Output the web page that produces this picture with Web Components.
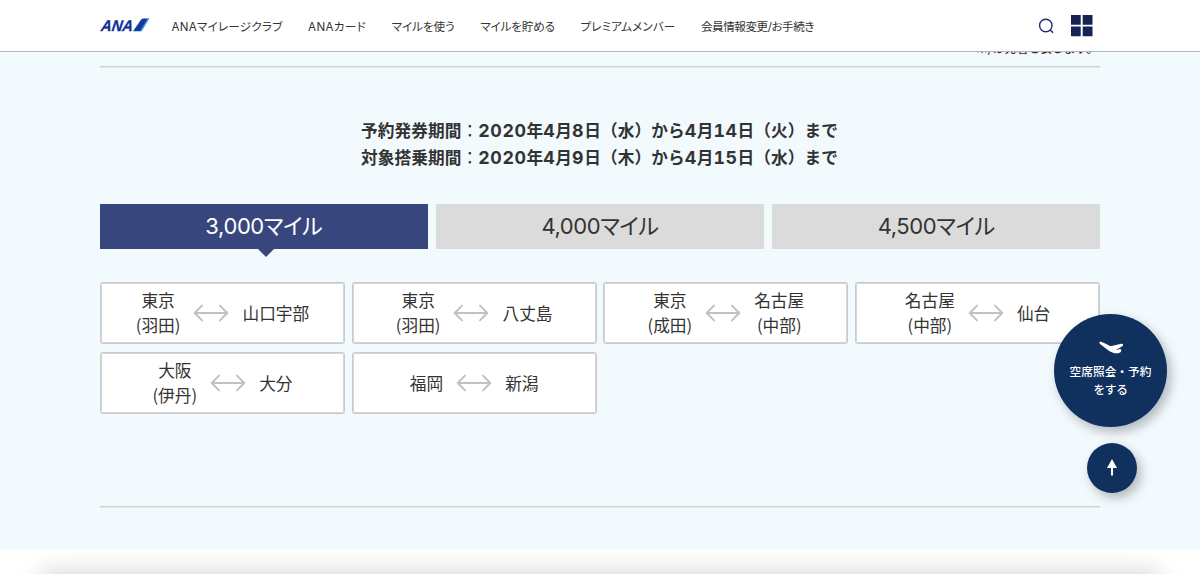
<!DOCTYPE html>
<html lang="ja">
<head>
<meta charset="utf-8">
<title>ANA トクたびマイル</title>
<style>
html,body{margin:0;height:574px;overflow:hidden}
body{font-family:"Liberation Sans","Noto Sans CJK JP",sans-serif;color:#333;background:#fff}
</style>
</head>
<body>
<miles-page></miles-page>
<script>
const define=(name,html,init)=>customElements.define(name,class extends HTMLElement{
  constructor(){super();this.attachShadow({mode:'open'}).innerHTML=html;}
  connectedCallback(){if(init)init(this,this.shadowRoot);}
});

/* Text set to a given measure by even tracking. */
define('fit-text','<style>:host{display:block;white-space:nowrap;flex:none}span{display:inline-block}</style><span><slot></slot></span>',(el,root)=>{
  const w=+el.getAttribute('w'),s=root.querySelector('span');
  el.style.width=w+'px';
  const n=[...el.textContent].length;
  if(n)s.style.letterSpacing=((w-s.getBoundingClientRect().width)/n)+'px';
});

define('ana-logo',`<style>:host{display:block;width:50px;height:15px}svg{display:block}text{font:italic bold 15.6px "Liberation Sans",sans-serif}</style>
<svg width="50" height="15" viewBox="0 0 50 15"><text x="0" y="13.3" transform="translate(2.4 0) skewX(-8)" fill="#12309b" stroke="#12309b" stroke-width=".3" textLength="32" lengthAdjust="spacingAndGlyphs">ANA</text>
<path d="M41 1.8Q42 .5 43.5 .5H49L41.3 13.3H33Z" fill="#123a9c"/><path d="M47.8 .5h1.6L41.7 13.3h-1.7Z" fill="#43a5e2"/></svg>`);

define('site-header',`<style>
:host{display:flex;align-items:center;box-sizing:border-box;height:52px;background:#fff;border-bottom:1px solid #b4b7ba;padding:0 107.5px 0 100px}
nav{display:flex;gap:25.6px;margin-left:21.5px;font-size:11.6px;line-height:18px;flex:1;font-family:Inter,"Noto Sans CJK JP",sans-serif;font-feature-settings:"palt";padding-top:2px}
.tools{display:flex;align-items:center;gap:16px;padding-top:1px}svg{display:block}
</style>
<ana-logo></ana-logo>
<nav><fit-text w="111">ANAマイレージクラブ</fit-text><fit-text w="58">ANAカード</fit-text><fit-text w="63">マイルを使う</fit-text><fit-text w="74.5">マイルを貯める</fit-text><fit-text w="95">プレミアムメンバー</fit-text><fit-text w="113">会員情報変更/お手続き</fit-text></nav>
<div class="tools"><svg width="17" height="17" viewBox="0 0 17 17" fill="none" stroke="#1b2d72" stroke-width="1.4"><circle cx="7.8" cy="7.5" r="6.2"/><path d="M12 11.8l3 3"/></svg>
<svg width="22" height="22" viewBox="0 0 22 22" fill="#152453"><path d="M0 0h9.7v9.7H0zM11.7 0h9.8v9.7h-9.8zM0 11.6h9.7v9.7H0zM11.7 11.6h9.8v9.7h-9.8z"/></svg></div>`);

define('mile-tab',`<style>
:host{display:flex;justify-content:center;align-items:center;box-sizing:border-box;height:45px;padding-bottom:2px;background:#dbdbdb;color:#333;position:relative;font:22px/32px Inter,"Noto Sans CJK JP",sans-serif;font-feature-settings:"palt"}
:host([selected]){background:#37477e;color:#fff}
:host([selected])::after{content:"";position:absolute;top:44.5px;left:158px;border:8.5px solid transparent;border-top-color:#37477e;border-bottom:0}
</style><fit-text w="117"><slot></slot></fit-text>`,(el,root)=>{
  const s=root.querySelector('fit-text').shadowRoot.querySelector('span');
  s.style.letterSpacing='0';
  s.style.letterSpacing=((117-s.getBoundingClientRect().width)/el.textContent.length)+'px';
});

define('route-arrow',`<style>:host{display:block;width:36px;height:18px}svg{display:block}</style>
<svg width="36" height="18" viewBox="0 0 36 18" fill="none" stroke="#c1c1c1" stroke-width="2" stroke-linecap="round" stroke-linejoin="round"><path d="M2 9H34M9 1.6L1.7 9L9 16.4M27 1.6L34.3 9L27 16.4"/></svg>`);

define('route-card',`<style>
:host{display:flex;align-items:center;justify-content:center;box-sizing:border-box;height:62px;border:1px solid #c9cacc;box-shadow:inset 0 0 0 1px #d5d6d8;border-radius:2.5px;background:#fff;font:16.7px/25px "Noto Sans CJK JP",sans-serif;text-align:center;white-space:nowrap}
route-arrow{margin:0 13px}
</style><slot name="from"></slot><route-arrow></route-arrow><slot name="to"></slot>`);

define('booking-button',`<style>
:host{display:flex;flex-direction:column;align-items:center;box-sizing:border-box;width:113px;height:113px;padding-top:27px;border-radius:50%;background:#10305e;box-shadow:4px 5px 11px #0004;color:#fff;text-align:center;font:500 11.7px/18px "Noto Sans CJK JP",sans-serif}
svg{display:block;margin-bottom:7.5px}
</style><svg width="24" height="13" viewBox="0 0 24 13" fill="#fff"><path d="M1.2.6C.2 1 .2 2 1 2.9L9.5 9.5C13 12 17 12.9 20 12c2.8-.7 2.7-3.7 1.3-4-1.2-.3-2.5 1-4.3.8 2.8-1.4 6.1-3 7-4.3.7-1.4-.6-2.2-1.8-1.7L11.6 5.3C8.5 4 5 1.5 1.2.6Z"/></svg><fit-text w="82">空席照会・予約</fit-text><fit-text w="34">をする</fit-text>`);

define('top-button',`<style>:host{display:flex;align-items:center;justify-content:center;box-sizing:border-box;width:50px;height:50px;padding-bottom:1px;border-radius:50%;background:#10305e;box-shadow:4px 5px 11px #0004}svg{display:block}</style>
<svg width="10" height="17" viewBox="0 0 10 17"><path d="M5 0L10 9H6V16.5H4V9H0Z" fill="#fff"/></svg>`);

define('miles-page',`<style>
:host{display:block;position:relative;width:1200px;height:574px;overflow:hidden}
site-header{position:absolute;inset:0 0 auto;z-index:2}
main{box-sizing:border-box;height:549px;background:#f2fafe;padding:34px 100px 0}
.note{display:flex;justify-content:flex-end;height:32px;font:500 12px/28px "Noto Sans CJK JP",sans-serif;padding-right:2px;box-sizing:border-box}
section{box-sizing:border-box;height:441px;border:solid #cdd1d3;border-width:1px 0;box-shadow:0 1px #e3e9ec,inset 0 1px #e3e9ec;padding-top:50px}
.period{display:flex;flex-direction:column;align-items:center;font:bold 16.67px/27px "Noto Sans CJK JP",sans-serif}
.period i{font:normal bold 17.8px/20px Inter,sans-serif;font-feature-settings:"tnum";letter-spacing:.55px}
.period u{font-weight:400;text-decoration:none}
.tabs{display:grid;grid-template-columns:repeat(3,1fr);gap:8.5px;margin-top:33px}
.routes{display:grid;grid-template-columns:repeat(4,245px);gap:8px 6.7px;margin-top:33px}
.float{position:absolute;z-index:1;left:1054px;top:314px;display:flex;flex-direction:column;align-items:center;gap:16px}
top-button{margin-left:2px}
footer{height:25px;position:relative;overflow:hidden}
footer::before{content:"";position:absolute;left:44px;right:44px;top:27px;height:40px;box-shadow:0 0 27px 3px #0000002e}
</style>
<site-header></site-header>
<main><div class="note"><fit-text w="122">※/は発着を表します。</fit-text></div>
<section>
<div class="period"><fit-text w="478">予約発券期間<u>：</u><i>2020</i>年<i>4</i>月<i>8</i>日（水）から<i>4</i>月<i>14</i>日（火）まで</fit-text><fit-text w="478">対象搭乗期間<u>：</u><i>2020</i>年<i>4</i>月<i>9</i>日（木）から<i>4</i>月<i>15</i>日（水）まで</fit-text></div>
<div class="tabs"><mile-tab selected>3,000マイル</mile-tab><mile-tab>4,000マイル</mile-tab><mile-tab>4,500マイル</mile-tab></div>
<div class="routes">
<route-card><span slot="from">東京<br>(羽田)</span><span slot="to">山口宇部</span></route-card>
<route-card><span slot="from">東京<br>(羽田)</span><span slot="to">八丈島</span></route-card>
<route-card><span slot="from">東京<br>(成田)</span><span slot="to">名古屋<br>(中部)</span></route-card>
<route-card><span slot="from">名古屋<br>(中部)</span><span slot="to">仙台</span></route-card>
<route-card><span slot="from">大阪<br>(伊丹)</span><span slot="to">大分</span></route-card>
<route-card><span slot="from">福岡</span><span slot="to">新潟</span></route-card>
</div></section></main>
<footer></footer>
<div class="float"><booking-button></booking-button><top-button></top-button></div>`);
</script>
</body>
</html>
